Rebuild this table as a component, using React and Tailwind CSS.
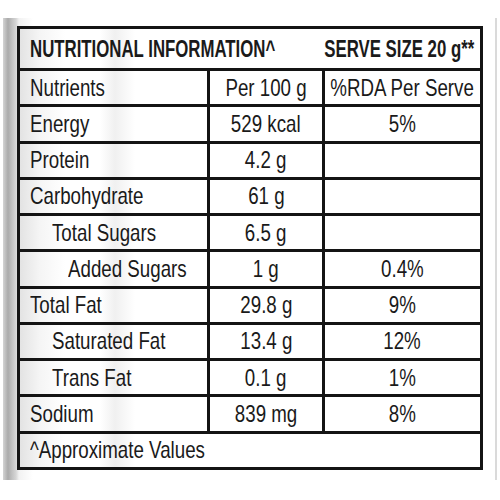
const rows = [
  { name: 'Nutrients', per: 'Per 100 g', rda: '%RDA Per Serve', pad: 'pl-[10px]' },
  { name: 'Energy', per: '529 kcal', rda: '5%', pad: 'pl-[10px]' },
  { name: 'Protein', per: '4.2 g', rda: '', pad: 'pl-[10px]' },
  { name: 'Carbohydrate', per: '61 g', rda: '', pad: 'pl-[10px]' },
  { name: 'Total Sugars', per: '6.5 g', rda: '', pad: 'pl-[32px]' },
  { name: 'Added Sugars', per: '1 g', rda: '0.4%', pad: 'pl-[48px]' },
  { name: 'Total Fat', per: '29.8 g', rda: '9%', pad: 'pl-[10px]' },
  { name: 'Saturated Fat', per: '13.4 g', rda: '12%', pad: 'pl-[32px]' },
  { name: 'Trans Fat', per: '0.1 g', rda: '1%', pad: 'pl-[32px]' },
  { name: 'Sodium', per: '839 mg', rda: '8%', pad: 'pl-[10px]' },
];

const font = { fontFamily: '"Liberation Sans", Arial, sans-serif' };

// the print on the pack is a condensed grotesque, so squeeze Liberation Sans
function Narrow({ children, origin = 'origin-center' }) {
  return (
    <span className={`inline-block shrink-0 whitespace-nowrap scale-x-[0.78] ${origin}`}>{children}</span>
  );
}

export default function App() {
  return (
    <div className="w-[500px] h-[500px] bg-white pt-[18px] pl-[3px]" style={font}>
      {/* silver pack panel */}
      <div className="relative w-[494px] h-[462px] pt-[8px] pl-[14px] border-r-2 border-[#dadada] bg-[linear-gradient(90deg,#d4d4d4_0px,#ababab_5px,#c2c2c2_9px,#d6d6d6_13px,#f2f2f2_16px,#ffffff_30px)]">
        <div className="w-[466px] h-[444px] border-[3px] border-[#141414] flex flex-col text-[#1a1a1a] bg-[linear-gradient(90deg,#e3e3e3_0px,#f5f5f5_20px,#ffffff_45px,#ffffff_80px,#f0f0f0_95px,#ffffff_115px)]">
          {/* title row */}
          <div className="h-[39px] shrink-0 flex items-center pl-[10px] pr-[6px] font-bold text-[24px] leading-none">
            <div className="flex-1 min-w-0 flex">
              <span className="inline-block shrink-0 whitespace-nowrap scale-x-[0.7] origin-left">NUTRITIONAL INFORMATION^</span>
            </div>
            <div className="flex-1 min-w-0 flex justify-end">
              <span className="inline-block shrink-0 whitespace-nowrap scale-x-[0.7] origin-right">SERVE SIZE 20 g**</span>
            </div>
          </div>

          {rows.map((r) => (
            <div key={r.name} className="flex-1 flex border-t-[3px] border-[#141414] text-[24px] leading-none">
              <div className={`w-[187px] shrink-0 min-w-0 flex items-center ${r.pad}`}>
                <Narrow origin="origin-left">{r.name}</Narrow>
              </div>
              <div className="w-[115px] shrink-0 min-w-0 flex items-center justify-center border-l-[3px] border-[#141414]">
                <Narrow>{r.per}</Narrow>
              </div>
              <div className="flex-1 min-w-0 flex items-center justify-center border-l-[3px] border-[#141414]">
                <Narrow>{r.rda}</Narrow>
              </div>
            </div>
          ))}

          <div className="flex-1 flex items-center border-t-[3px] border-[#141414] pl-[10px] text-[24px] leading-none">
            <Narrow origin="origin-left">^Approximate Values</Narrow>
          </div>
        </div>
      </div>
    </div>
  );
}
